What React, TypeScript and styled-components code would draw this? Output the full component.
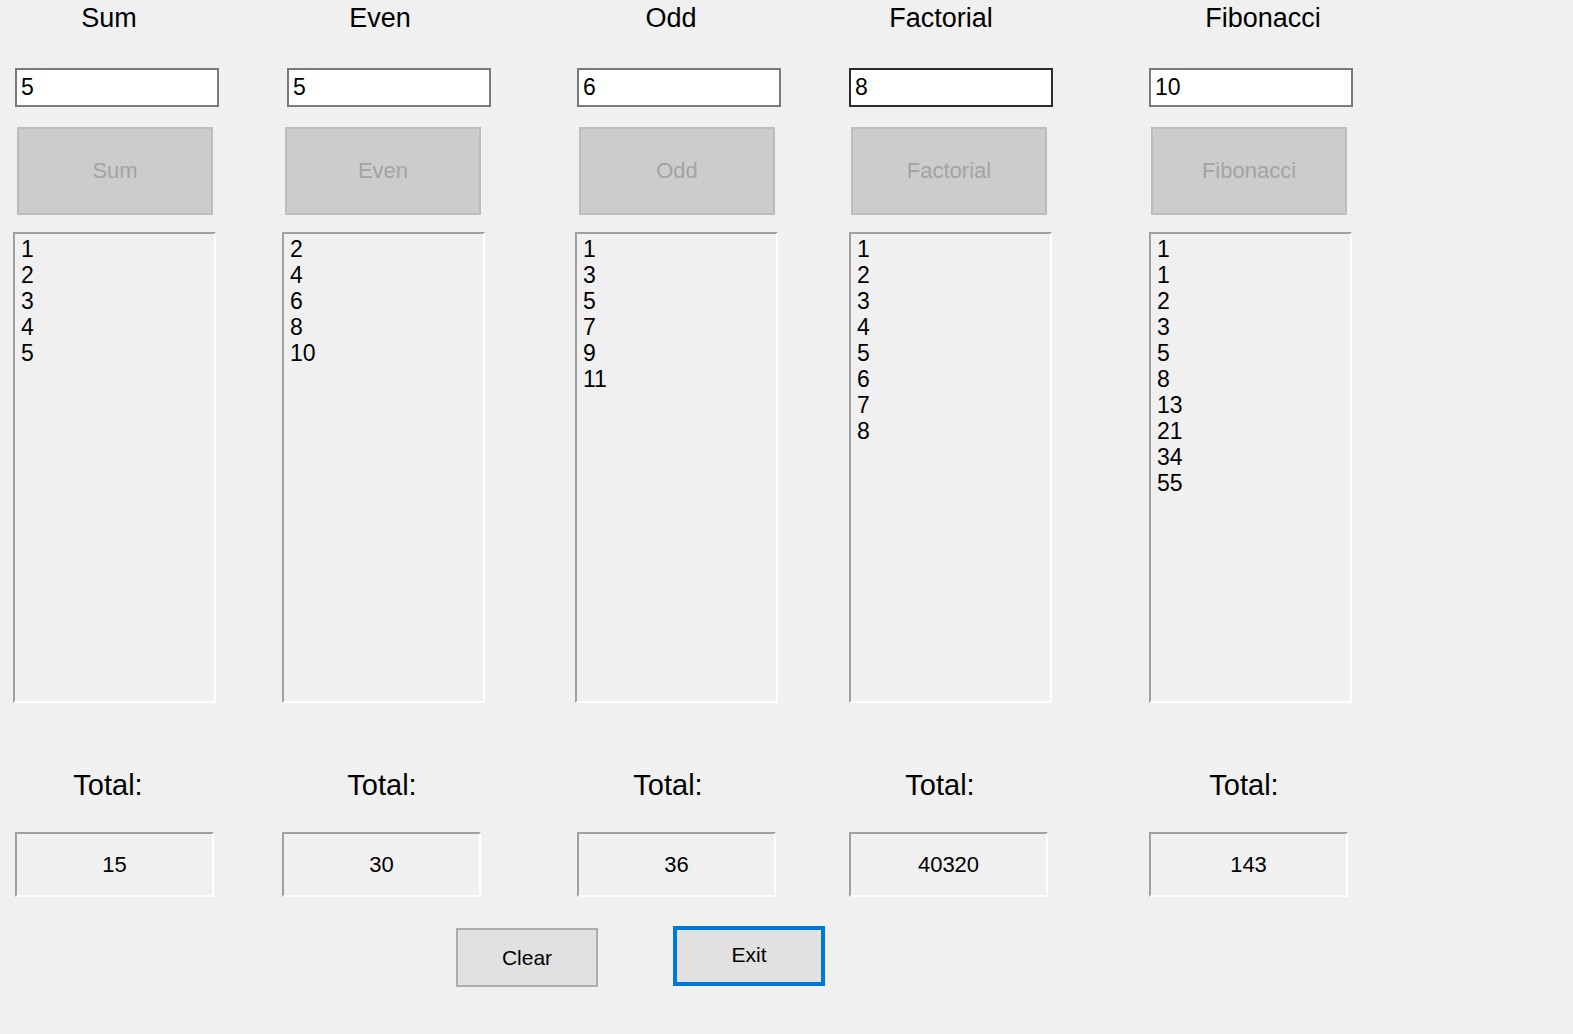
import React from 'react';
import styled, {createGlobalStyle} from 'styled-components';

const GlobalStyle = createGlobalStyle`
    html, body {
        margin: 0;
        padding: 0;
        background: #f0f0f0;
    }
    body {
        min-height: 1034px;
        font-family: 'Liberation Sans', Arial, sans-serif;
        color: #000;
    }
`;

type Offsets = {
    input: number;
    button: number;
    list: number;
    total: number;
};

type Calculator = {
    title: string;
    value: string;
    items: number[];
    total: string;
    left: number;
    titleCenter: number;
    labelCenter: number;
    offsets: Offsets;
    focused?: boolean;
};

const calculators: Calculator[] = [
    {
        title: 'Sum',
        value: '5',
        items: [1, 2, 3, 4, 5],
        total: '15',
        left: 13,
        titleCenter: 96,
        labelCenter: 95,
        offsets: {input: 2, button: 4, list: 0, total: 2},
    },
    {
        title: 'Even',
        value: '5',
        items: [2, 4, 6, 8, 10],
        total: '30',
        left: 282,
        titleCenter: 98,
        labelCenter: 100,
        offsets: {input: 5, button: 3, list: 0, total: 0},
    },
    {
        title: 'Odd',
        value: '6',
        items: [1, 3, 5, 7, 9, 11],
        total: '36',
        left: 575,
        titleCenter: 96,
        labelCenter: 93,
        offsets: {input: 2, button: 4, list: 0, total: 2},
    },
    {
        title: 'Factorial',
        value: '8',
        items: [1, 2, 3, 4, 5, 6, 7, 8],
        total: '40320',
        left: 849,
        titleCenter: 92,
        labelCenter: 91,
        offsets: {input: 0, button: 2, list: 0, total: 0},
        focused: true,
    },
    {
        title: 'Fibonacci',
        value: '10',
        items: [1, 1, 2, 3, 5, 8, 13, 21, 34, 55],
        total: '143',
        left: 1149,
        titleCenter: 114,
        labelCenter: 95,
        offsets: {input: 0, button: 2, list: 0, total: 0},
    },
];

const Form = styled.div`
    display: flex;
    flex-direction: column;
    width: 1573px;
    min-height: 1034px;
    background: #f0f0f0;
`;

const Columns = styled.div`
    display: flex;
    align-items: flex-start;
`;

const Column = styled.div<{$gap: number}>`
    display: flex;
    flex-direction: column;
    width: 210px;
    margin-left: ${({$gap}) => $gap}px;
`;

const Caption = styled.div<{$center: number; $size: number; $height: number}>`
    width: 200px;
    margin-left: ${({$center}) => $center - 100}px;
    height: ${({$height}) => $height}px;
    line-height: ${({$height}) => $height}px;
    font-size: ${({$size}) => $size}px;
    text-align: center;
    white-space: nowrap;
`;

const TextInput = styled.div<{$dx: number; $focused?: boolean}>`
    box-sizing: border-box;
    width: 204px;
    height: 39px;
    margin-top: 31px;
    margin-left: ${({$dx}) => $dx}px;
    padding-left: 4px;
    border: 2px solid ${({$focused}) => ($focused ? '#2b2b2b' : '#7a7a7a')};
    background: #fff;
    font-size: 23px;
    line-height: 35px;
`;

const DisabledButton = styled.div<{$dx: number}>`
    box-sizing: border-box;
    display: flex;
    align-items: center;
    justify-content: center;
    width: 196px;
    height: 88px;
    margin-top: 20px;
    margin-left: ${({$dx}) => $dx}px;
    border: 2px solid #bdbdbd;
    background: #cccccc;
    color: #a3a3a3;
    font-size: 22px;
`;

const sunken = `
    border-style: solid;
    border-width: 2px;
    border-color: #a0a0a0 #ffffff #ffffff #a0a0a0;
    background: #f0f0f0;
`;

const ListBox = styled.div<{$dx: number}>`
    box-sizing: border-box;
    display: flex;
    flex-direction: column;
    width: 203px;
    height: 471px;
    margin-top: 17px;
    margin-left: ${({$dx}) => $dx}px;
    padding: 2px 0 0 6px;
    ${sunken}
`;

const ListItem = styled.div`
    height: 26px;
    line-height: 26px;
    font-size: 23px;
`;

const TotalLabel = styled(Caption)`
    margin-top: 57px;
`;

const TotalBox = styled.div<{$dx: number}>`
    box-sizing: border-box;
    display: flex;
    align-items: center;
    justify-content: center;
    width: 199px;
    height: 65px;
    margin-top: 22px;
    margin-left: ${({$dx}) => $dx}px;
    ${sunken}
    font-size: 22px;
`;

const ActionRow = styled.div`
    display: flex;
    align-items: flex-start;
    margin-top: 29px;
    padding-left: 456px;
`;

const ActionButton = styled.button<{$primary?: boolean}>`
    box-sizing: border-box;
    display: flex;
    align-items: center;
    justify-content: center;
    width: ${({$primary}) => ($primary ? 152 : 142)}px;
    height: ${({$primary}) => ($primary ? 60 : 59)}px;
    margin-top: ${({$primary}) => ($primary ? 0 : 2)}px;
    margin-left: ${({$primary}) => ($primary ? 75 : 0)}px;
    padding: 0 0 ${({$primary}) => ($primary ? 2 : 0)}px;
    border: ${({$primary}) => ($primary ? '4px solid #0078d7' : '2px solid #adadad')};
    background: #e1e1e1;
    color: #000;
    font-family: 'Liberation Sans', Arial, sans-serif;
    font-size: 21px;
    cursor: default;
`;

const CalculatorColumn = ({calc, gap}: {calc: Calculator; gap: number}) => (
    <Column $gap={gap}>
        <Caption $center={calc.titleCenter} $size={27} $height={37}>
            {calc.title}
        </Caption>
        <TextInput $dx={calc.offsets.input} $focused={calc.focused}>
            {calc.value}
        </TextInput>
        <DisabledButton $dx={calc.offsets.button}>{calc.title}</DisabledButton>
        <ListBox $dx={calc.offsets.list}>
            {calc.items.map((item, index) => (
                <ListItem key={index}>{item}</ListItem>
            ))}
        </ListBox>
        <TotalLabel $center={calc.labelCenter} $size={29} $height={50}>
            Total:
        </TotalLabel>
        <TotalBox $dx={calc.offsets.total}>{calc.total}</TotalBox>
    </Column>
);

const App = () => (
    <>
        <GlobalStyle />
        <Form>
            <Columns>
                {calculators.map((calc, index) => {
                    const previousEnd = index === 0 ? 0 : calculators[index - 1].left + 210;
                    return <CalculatorColumn key={calc.title} calc={calc} gap={calc.left - previousEnd} />;
                })}
            </Columns>
            <ActionRow>
                <ActionButton>Clear</ActionButton>
                <ActionButton $primary>Exit</ActionButton>
            </ActionRow>
        </Form>
    </>
);

export default App;
